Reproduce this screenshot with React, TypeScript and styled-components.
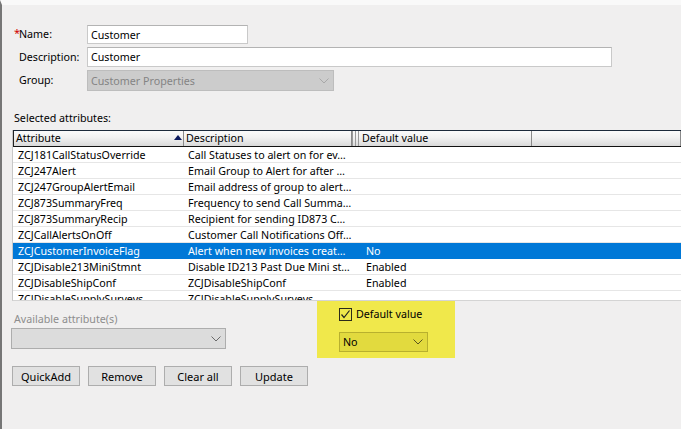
import React from "react";
import styled, { createGlobalStyle } from "styled-components";

const Global = createGlobalStyle`
  html, body { margin: 0; padding: 0; background: #f0f0f0; }
  * { box-sizing: border-box; }
`;

const Window = styled.div`
  width: 681px;
  height: 429px;
  overflow: hidden;
  background: #f0efef;
  border-left: 2px solid #767676;
  border-top: 5px solid #f9f9f9;
  font-family: "Noto Sans", "Liberation Sans", sans-serif;
  font-size: 10.7px;
  color: #000;
  display: flex;
  flex-direction: column;
`;

const Form = styled.div`
  display: grid;
  grid-template-columns: 74px auto;
  row-gap: 3px;
  align-items: center;
  padding: 20px 0 0 11px;
  justify-items: start;
`;

const Label = styled.label`
  padding-left: 6px;
  position: relative;
  line-height: 15px;
  white-space: nowrap;
`;

const Required = styled.span`
  color: #d00000;
  position: absolute;
  left: 1px;
  top: -2px;
  font-size: 11px;
`;

const TextBox = styled.div<{ $w: number; $h: number }>`
  width: ${(p) => p.$w}px;
  height: ${(p) => p.$h}px;
  background: #fff;
  border: 1px solid #c9c9c9;
  border-top-color: #b3b3b3;
  padding: 0 3px;
  display: flex;
  align-items: center;
`;

const DisabledSelect = styled.div<{ $w: number; $h: number }>`
  width: ${(p) => p.$w}px;
  height: ${(p) => p.$h}px;
  background: #cccccc;
  border: 1px solid #bdbdbd;
  color: #848484;
  padding: 0 4px 0 3px;
  display: flex;
  align-items: center;
  justify-content: space-between;
`;

const AvailableSelect = styled(DisabledSelect)`
  background: #dcdcdc;
  border-color: #adadad;
`;

const SectionLabel = styled.div`
  margin: 20px 0 4px 12px;
  line-height: 15px;
`;

const Grid = styled.div`
  margin-left: 10px;
  height: 171px;
  flex: none;
  background: #fff;
  border-left: 1px solid #c8c8c8;
  border-bottom: 1px solid #d4d4d4;
  overflow: hidden;
`;

const HeaderRow = styled.div`
  display: flex;
  height: 17px;
  border-top: 1px solid #1c2a3b;
  border-bottom: 1px solid #111;
  border-left: 1px solid #222;
  background: linear-gradient(#fbfbfb, #f1f1f1 45%, #d9d9d9);
`;

const HeaderCell = styled.div<{ $w?: number; $pl?: number }>`
  ${(p) => (p.$w ? `width: ${p.$w}px; flex: none;` : "flex: 1;")}
  padding-left: ${(p) => p.$pl ?? 3}px;
  border-right: 1px solid #8a8a8a;
  line-height: 15px;
  position: relative;
  white-space: nowrap;
`;

const SortArrow = styled.span`
  position: absolute;
  right: 1px;
  top: 4px;
  width: 0;
  height: 0;
  border-left: 4px solid transparent;
  border-right: 4px solid transparent;
  border-bottom: 5px solid #0b1a5e;
`;

const Splitter = styled.div`
  width: 7px;
  flex: none;
  border-left: 1px solid #9a9a9a;
  border-right: 1px solid #9a9a9a;
  display: flex;
  justify-content: center;
  &::after {
    content: "";
    width: 1px;
    background: #9a9a9a;
  }
`;

const Row = styled.div<{ $sel?: boolean }>`
  display: flex;
  height: 16px;
  align-items: center;
  border-bottom: 1px solid ${(p) => (p.$sel ? "#0078d7" : "#e6e6e6")};
  background: ${(p) => (p.$sel ? "#0078d7" : "#fff")};
  color: ${(p) => (p.$sel ? "#fff" : "#000")};
`;

const Cell = styled.div<{ $w?: number; $pl: number }>`
  ${(p) => (p.$w ? `width: ${p.$w}px; flex: none;` : "flex: 1;")}
  padding-left: ${(p) => p.$pl}px;
  padding-top: 1px;
  white-space: nowrap;
  overflow: hidden;
  line-height: 15px;
`;

const Bottom = styled.div`
  display: flex;
  align-items: flex-start;
`;

const LeftCol = styled.div`
  width: 315px;
  flex: none;
  display: flex;
  flex-direction: column;
  align-items: flex-start;
`;

const GrayLabel = styled.div`
  color: #8d8d8d;
  margin: 11px 0 0 12px;
  line-height: 15px;
`;

const SelectWrap = styled.div`
  margin: 1px 0 0 9px;
`;

const ButtonRow = styled.div`
  display: flex;
  gap: 8px;
  margin: 17px 0 0 10px;
`;

const Button = styled.button`
  width: 68px;
  height: 20px;
  background: #e1e1e1;
  border: 1px solid #adadad;
  font: inherit;
  font-size: 11px;
  color: #000;
  padding: 0;
  line-height: 17px;
`;

const Highlight = styled.div`
  width: 138px;
  height: 57px;
  background: #f0e84b;
  padding: 6px 0 0 22px;
  display: flex;
  flex-direction: column;
  gap: 10px;
`;

const CheckLine = styled.div`
  display: flex;
  align-items: center;
  gap: 4px;
  line-height: 15px;
`;

const CheckBox = styled.span`
  width: 13px;
  height: 13px;
  border: 1px solid #2b2b1a;
  display: flex;
  align-items: center;
  justify-content: center;
`;

const YellowSelect = styled.div`
  width: 89px;
  height: 20px;
  background: #e2da3e;
  border: 1px solid #b8b02e;
  padding: 0 4px 0 3px;
  display: flex;
  align-items: center;
  justify-content: space-between;
`;

const Chevron = ({ color = "#6a6a6a" }: { color?: string }) => (
  <svg width="10" height="6" viewBox="0 0 10 6">
    <polyline points="0.5,0.5 5,5 9.5,0.5" fill="none" stroke={color} strokeWidth="1" />
  </svg>
);

const rows: [string, string, string][] = [
  ["ZCJ181CallStatusOverride", "Call Statuses to alert on for ev…", ""],
  ["ZCJ247Alert", "Email Group to Alert for after …", ""],
  ["ZCJ247GroupAlertEmail", "Email address of group to alert…", ""],
  ["ZCJ873SummaryFreq", "Frequency to send Call Summa…", ""],
  ["ZCJ873SummaryRecip", "Recipient for sending ID873 C…", ""],
  ["ZCJCallAlertsOnOff", "Customer Call Notifications Off…", ""],
  ["ZCJCustomerInvoiceFlag", "Alert when new invoices creat…", "No"],
  ["ZCJDisable213MiniStmnt", "Disable ID213 Past Due Mini st…", "Enabled"],
  ["ZCJDisableShipConf", "ZCJDisableShipConf", "Enabled"],
  ["ZCJDisableSupplySurveys", "ZCJDisableSupplySurveys", ""],
];

export default function App() {
  return (
    <>
      <Global />
      <Window>
        <Form>
          <Label>
            <Required>*</Required>Name:
          </Label>
          <TextBox $w={161} $h={19}>Customer</TextBox>
          <Label>Description:</Label>
          <TextBox $w={525} $h={20}>Customer</TextBox>
          <Label>Group:</Label>
          <DisabledSelect $w={247} $h={21}>
            Customer Properties
            <Chevron color="#a8a8a8" />
          </DisabledSelect>
        </Form>
        <SectionLabel>Selected attributes:</SectionLabel>
        <Grid>
          <HeaderRow>
            <HeaderCell $w={170} $pl={2}>
              Attribute
              <SortArrow />
            </HeaderCell>
            <HeaderCell $w={168} $pl={2}>Description</HeaderCell>
            <Splitter />
            <HeaderCell $w={173} $pl={3}>Default value</HeaderCell>
            <HeaderCell />
          </HeaderRow>
          {rows.map(([a, d, v], i) => (
            <Row key={a} $sel={i === 6}>
              <Cell $w={171} $pl={5}>{a}</Cell>
              <Cell $w={175} $pl={4}>{d}</Cell>
              <Cell $pl={7}>{v}</Cell>
            </Row>
          ))}
        </Grid>
        <Bottom>
          <LeftCol>
            <GrayLabel>Available attribute(s)</GrayLabel>
            <SelectWrap>
              <AvailableSelect $w={215} $h={21}>
                <span />
                <Chevron />
              </AvailableSelect>
            </SelectWrap>
            <ButtonRow>
              <Button>QuickAdd</Button>
              <Button>Remove</Button>
              <Button>Clear all</Button>
              <Button>Update</Button>
            </ButtonRow>
          </LeftCol>
          <Highlight>
            <CheckLine>
              <CheckBox>
                <svg width="11" height="11" viewBox="0 0 11 11">
                  <polyline points="1.5,5.5 4,8.5 9.5,1.5" fill="none" stroke="#222" strokeWidth="1.2" />
                </svg>
              </CheckBox>
              Default value
            </CheckLine>
            <YellowSelect>
              No
              <Chevron color="#5a5520" />
            </YellowSelect>
          </Highlight>
        </Bottom>
      </Window>
    </>
  );
}
